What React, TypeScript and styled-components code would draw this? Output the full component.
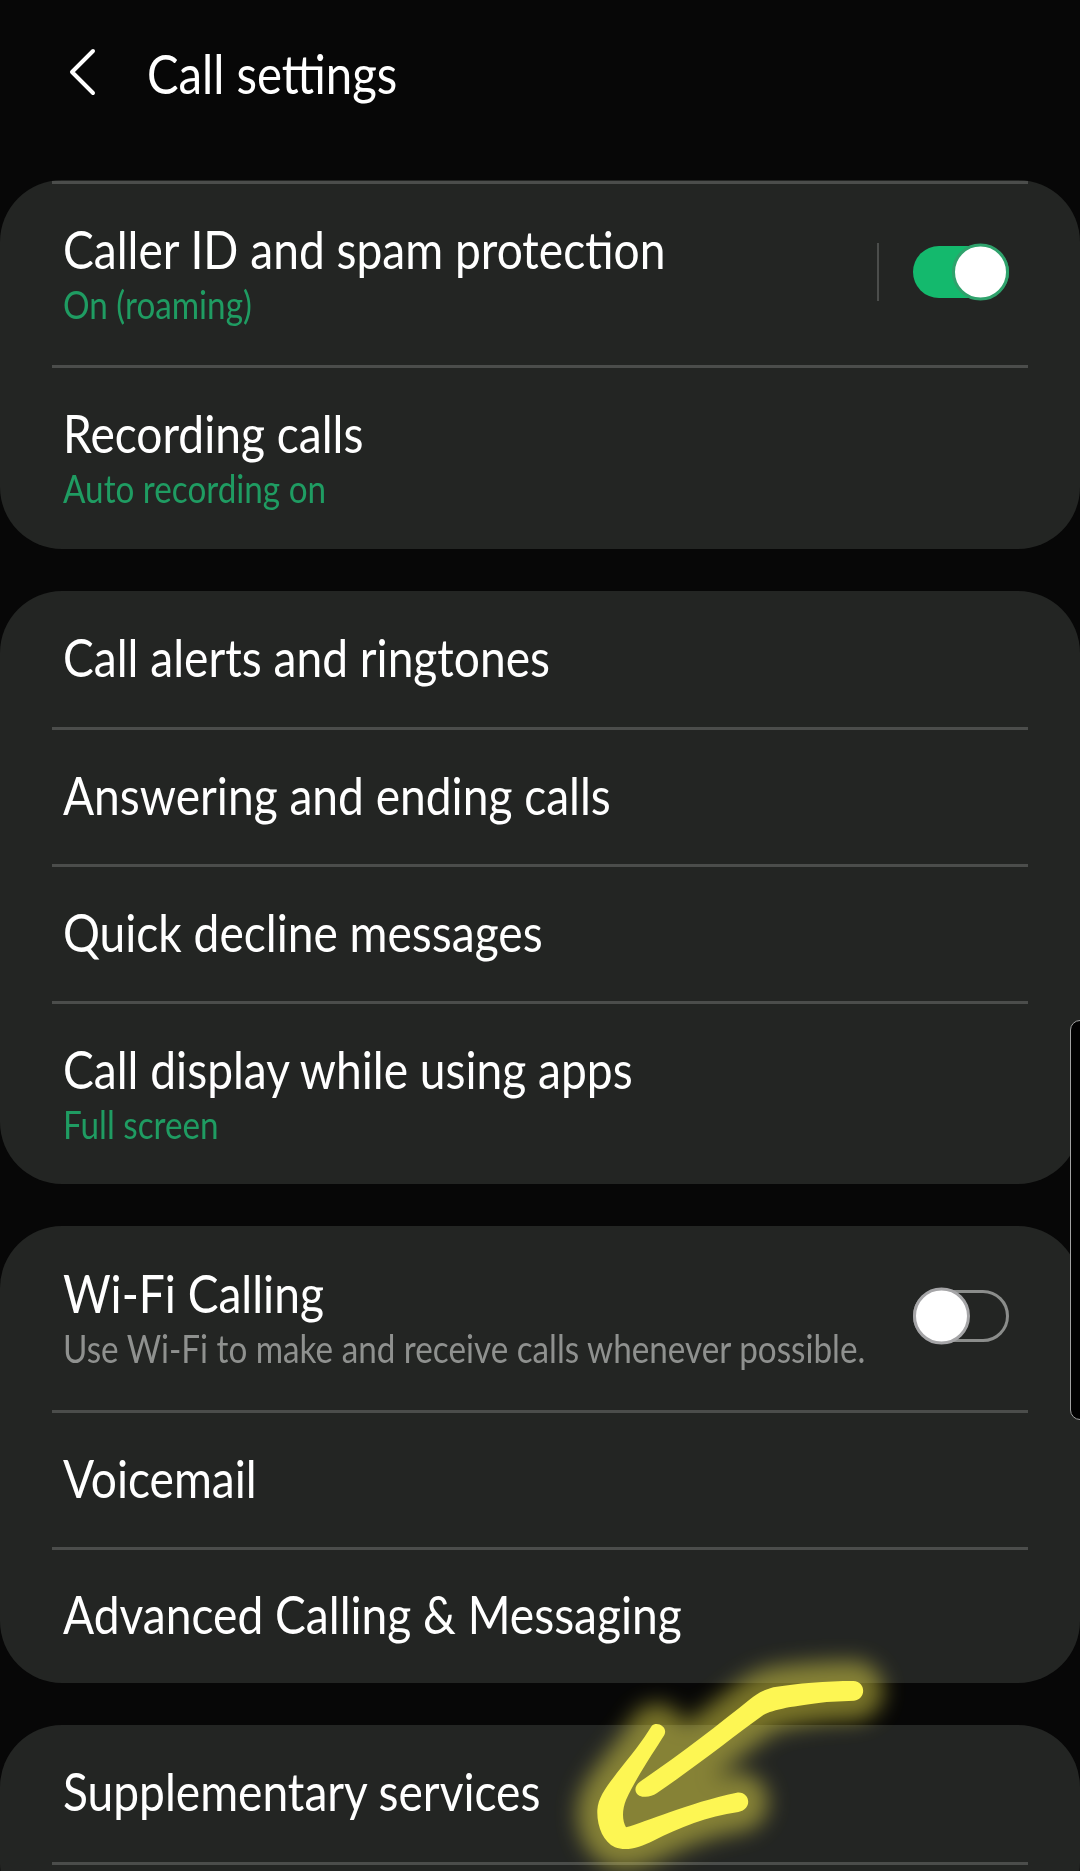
import React from "react";
import styled, { createGlobalStyle } from "styled-components";

const Global = createGlobalStyle`
  html, body { margin: 0; padding: 0; background: #070707; }
  body { width: 1080px; height: 1871px; overflow: hidden; font-family: "Lato", "Noto Sans", sans-serif; }
  #root { width: 1080px; height: 1871px; }
`;

const Page = styled.div`
  position: relative;
  width: 1080px;
  height: 1871px;
  overflow: hidden;
  background: #070707;
  display: flex;
  flex-direction: column;
`;

const Header = styled.header`
  height: 180px;
  flex: none;
  display: flex;
  align-items: flex-start;
  padding: 43px 0 0 66px;
  box-sizing: border-box;
  gap: 49px;
`;

const BackIcon = styled.svg`
  width: 32px;
  height: 48px;
  margin-top: 5px;
  flex: none;
`;

const Title = styled.h1`
  margin: 0;
  font-size: 55px;
  line-height: 60px;
  font-weight: 400;
  color: #fff;
  white-space: nowrap;
  transform: scaleX(0.86);
  transform-origin: left center;
`;

const Cards = styled.div`
  display: flex;
  flex-direction: column;
  gap: 42px;
`;

const Card = styled.section`
  background: #232523;
  border-radius: 62px;
  display: flex;
  flex-direction: column;
  overflow: hidden;
`;

const Row = styled.div<{ $h: number }>`
  height: ${(p) => p.$h}px;
  box-sizing: border-box;
  margin: 0 52px;
  padding: 0 11px 5px;
  display: flex;
  align-items: center;
  justify-content: space-between;
  border-bottom: 3px solid #4b4d4b;
  &:last-child { border-bottom: none; }
`;

const TopRule = styled.div`
  height: 3px;
  margin: 1px 52px 0;
  background: #4b4d4b;
  flex: none;
`;

const Texts = styled.div`
  display: flex;
  flex-direction: column;
  gap: 6px;
  min-width: 0;
`;

const Label = styled.div`
  font-size: 53px;
  line-height: 58px;
  font-weight: 400;
  color: #fff;
  white-space: nowrap;
  transform: scaleX(0.87);
  transform-origin: left center;
`;

const Sub = styled.div<{ $green?: boolean }>`
  font-size: 38px;
  line-height: 40px;
  font-weight: 400;
  color: ${(p) => (p.$green ? "#1f9c62" : "#8f918f")};
  white-space: nowrap;
  transform: scaleX(0.875);
  transform-origin: left center;
`;

const Controls = styled.div`
  display: flex;
  align-items: center;
  gap: 34px;
  margin-right: 8px;
`;

const VRule = styled.div`
  width: 2px;
  height: 58px;
  background: #4b4d4b;
`;

const Track = styled.div<{ $on: boolean }>`
  position: relative;
  width: 96px;
  height: 52px;
  box-sizing: border-box;
  border-radius: 26px;
  background: ${(p) => (p.$on ? "#14b96d" : "transparent")};
  border: ${(p) => (p.$on ? "none" : "3px solid #8b8d8b")};
`;

const Thumb = styled.div<{ $on: boolean }>`
  position: absolute;
  top: 50%;
  ${(p) => (p.$on ? "right: 0;" : "left: -3px;")}
  transform: translateY(-50%);
  width: 57px;
  height: 57px;
  box-sizing: border-box;
  border-radius: 50%;
  background: #fff;
  border: 3px solid ${(p) => (p.$on ? "#2fa26c" : "#a5a5a7")};
`;

const ScrollHandle = styled.div`
  position: absolute;
  left: 1070px;
  top: 1020px;
  width: 20px;
  height: 400px;
  box-sizing: border-box;
  background: #000;
  border: 1px solid #a0a0a0;
  border-radius: 12px;
`;

const Arrow = styled.svg`
  position: absolute;
  left: 480px;
  top: 1600px;
  width: 480px;
  height: 271px;
  pointer-events: none;
`;

const Toggle = ({ on }: { on: boolean }) => (
  <Track $on={on}>
    <Thumb $on={on} />
  </Track>
);

const shaft =
  "M1120 243 C1040 243 950 250 880 262 C850 270 830 282 810 298 C720 370 600 465 480 545 C462 558 462 578 478 587 C495 594 515 590 530 580 C640 505 760 410 850 345 C880 328 940 318 1040 306 L1122 302 C1158 300 1160 245 1120 243 Z";
const head =
  "M515 378 C530 362 565 380 553 405 C525 450 470 530 438 600 C426 630 426 660 438 682 C500 665 620 610 770 578 C810 572 820 628 775 636 C680 650 600 682 520 722 C480 742 440 755 405 742 C370 725 350 680 352 630 C355 590 380 560 410 520 C450 470 490 420 515 378 Z";

export default function App() {
  return (
    <Page>
      <Global />
      <Header>
        <BackIcon viewBox="0 0 32 48">
          <polyline points="27,3 6,24 27,45" fill="none" stroke="#fff" strokeWidth="4" strokeLinecap="round" strokeLinejoin="round" />
        </BackIcon>
        <Title>Call settings</Title>
      </Header>
      <Cards>
        <Card>
          <TopRule />
          <Row $h={184}>
            <Texts>
              <Label>Caller ID and spam protection</Label>
              <Sub $green>On (roaming)</Sub>
            </Texts>
            <Controls>
              <VRule />
              <Toggle on />
            </Controls>
          </Row>
          <Row $h={181}>
            <Texts>
              <Label>Recording calls</Label>
              <Sub $green>Auto recording on</Sub>
            </Texts>
          </Row>
        </Card>
        <Card>
          <Row $h={139}><Label>Call alerts and ringtones</Label></Row>
          <Row $h={137}><Label>Answering and ending calls</Label></Row>
          <Row $h={137}><Label>Quick decline messages</Label></Row>
          <Row $h={180}>
            <Texts>
              <Label>Call display while using apps</Label>
              <Sub $green>Full screen</Sub>
            </Texts>
          </Row>
        </Card>
        <Card>
          <Row $h={187}>
            <Texts>
              <Label>Wi-Fi Calling</Label>
              <Sub>Use Wi-Fi to make and receive calls whenever possible.</Sub>
            </Texts>
            <Controls>
              <Toggle on={false} />
            </Controls>
          </Row>
          <Row $h={137}><Label>Voicemail</Label></Row>
          <Row $h={133}><Label>Advanced Calling &amp; Messaging</Label></Row>
        </Card>
        <Card>
          <Row $h={140}><Label>Supplementary services</Label></Row>
          <Row $h={60} />
        </Card>
      </Cards>
      <ScrollHandle />
      <Arrow viewBox="0 0 1440 813">
        <defs>
          <filter id="glow" x="-30%" y="-30%" width="160%" height="160%">
            <feGaussianBlur stdDeviation="32" />
          </filter>
        </defs>
        <g filter="url(#glow)" fill="#e8de48" stroke="#e8de48" strokeWidth="120" strokeLinejoin="round" opacity="0.5">
          <path d={shaft} />
          <path d={head} />
        </g>
        <g fill="#fdf653">
          <path d={shaft} />
          <path d={head} />
        </g>
      </Arrow>
    </Page>
  );
}
